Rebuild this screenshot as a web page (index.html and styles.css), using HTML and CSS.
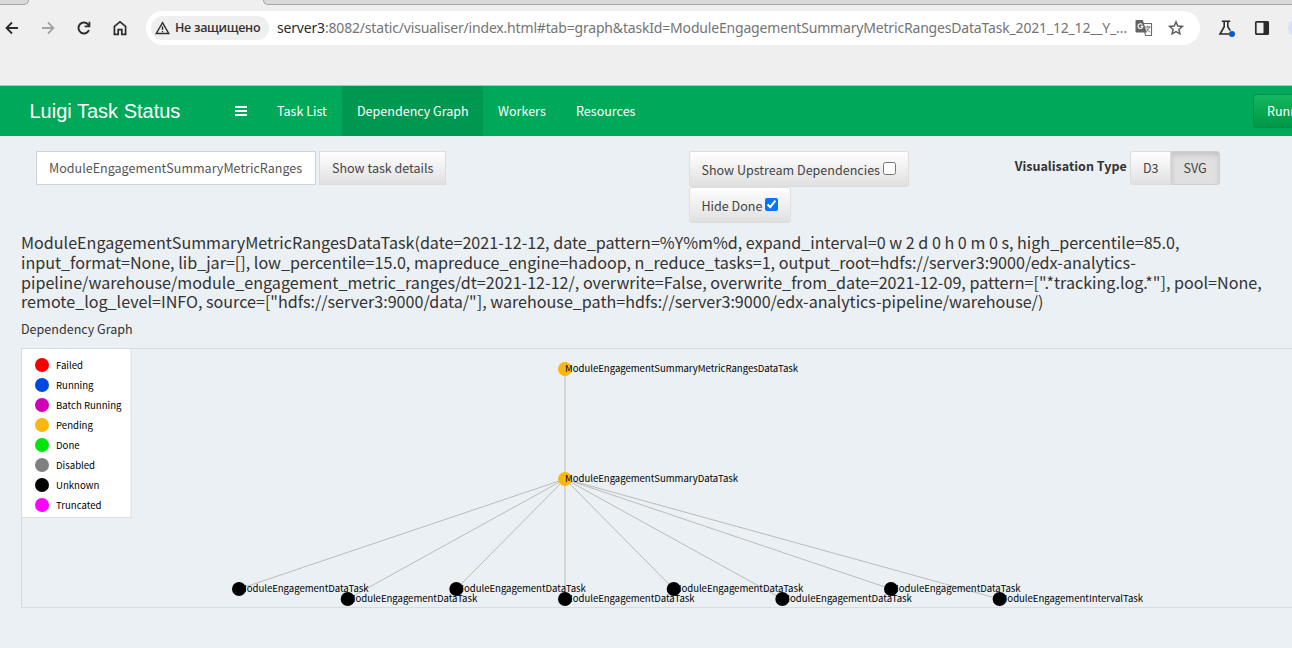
FILE: index.html
```html
<!DOCTYPE html>
<html lang="en">
<head>
<meta charset="utf-8">
<title>Luigi Task Visualiser</title>
<link rel="stylesheet" href="styles.css">
</head>
<body>
<div class="browser">
  <div class="tabstrip"><div class="tab-left"></div><div class="tab-active"></div><div class="tab-right"></div></div>
  <div class="toolbar">
    <div class="tools-left">
      <svg class="ico" viewBox="0 0 16 16"><path d="M14 8H2.800M8 2.500L2.500 8l5.500 5.500" fill="none" stroke="#2b2b2b" stroke-width="1.800"/></svg>
      <svg class="ico" viewBox="0 0 16 16"><path d="M2 8h11.200M8 2.500l5.500 5.500L8 13.500" fill="none" stroke="#a3a3a3" stroke-width="1.800"/></svg>
      <svg class="ico" viewBox="0 0 16 16"><path d="M13 10.200A5.500 5.500 0 1 1 12.300 4.600L13.200 5.700" fill="none" stroke="#2b2b2b" stroke-width="1.900"/><path d="M14.300 1.700v5.500H8.700V5.500h3.900V1.700z" fill="#2b2b2b"/></svg>
      <svg class="ico" viewBox="0 0 16 16"><path d="M2.400 6.300L8 1.900l5.600 4.400v8.100H9.800V9.600H6.200v4.800H2.400z" fill="none" stroke="#2b2b2b" stroke-width="1.700"/></svg>
    </div>
    <div class="omnibox">
      <div class="chip">
        <svg class="warn" viewBox="0 0 15 14"><path d="M7.500 1.700L13.700 12.500H1.300z" fill="none" stroke="#333" stroke-width="1.500"/><path d="M7.500 5.300v3.800M7.500 10v1.300" stroke="#333" stroke-width="1.400"/></svg>
        <span class="chip-text">Не защищено</span>
      </div>
      <div class="url"><span class="host">server3</span>:8082/static/visualiser/index.html#tab=graph&amp;taskId=ModuleEngagementSummaryMetricRangesDataTask_2021_12_12__Y_…</div>
      <svg class="translate" viewBox="0 0 18 18"><path d="M8 4.500h8.500v12H10.500z" fill="#fff" stroke="#6b6b6b" stroke-width="1.100"/><path d="M1.500 1h6.300l4 12.500H1.500a1 1 0 0 1-1-1V2a1 1 0 0 1 1-1z" fill="#646464"/><path d="M7.300 5.600A2.400 2.400 0 1 0 7.800 7.400H5.600" fill="none" stroke="#fff" stroke-width="1.100"/><path d="M10.300 8h5.200M12.600 6.800V8M14.500 8c-.5 2-2 3.500-3.200 4.500M11.700 9.500c.6 1.500 2 2.500 3.200 3.800" fill="none" stroke="#6b6b6b"/></svg>
      <svg class="star" viewBox="0 0 16 16"><path d="M8 1.900l1.800 4.100 4.500.4-3.400 3 1 4.400L8 11.500l-3.900 2.300 1-4.400-3.400-3 4.500-.4z" fill="none" stroke="#5c5c5c" stroke-width="1.500"/></svg>
    </div>
    <div class="tools-right">
      <svg class="flask" viewBox="0 0 18 18"><path d="M3.800 2.300h8.400M6.200 2.500v5.200L2 15h9M9.800 2.500v5.200l2.500 4" fill="none" stroke="#2b2b2b" stroke-width="1.600"/><circle cx="14" cy="15" r="3" fill="#0b57d0"/></svg>
      <svg class="panel" viewBox="0 0 16 16"><rect x="1.800" y="1.800" width="12.400" height="12.400" rx="1" fill="none" stroke="#2b2b2b" stroke-width="1.700"/><path d="M9.500 1.500h5v13h-5z" fill="#2b2b2b"/></svg>
      <div class="avatar"></div>
    </div>
  </div>
</div>

<header class="navbar">
  <div class="brand">Luigi Task Status</div>
  <div class="burger"><i></i><i></i><i></i></div>
  <nav class="nav">
    <a class="nav-item w-list">Task List</a>
    <a class="nav-item w-graph active">Dependency Graph</a>
    <a class="nav-item w-workers">Workers</a>
    <a class="nav-item w-res">Resources</a>
  </nav>
  <div class="run-btn">Running</div>
</header>

<main class="content">
  <div class="controls">
    <div class="search">
      <div class="field">ModuleEngagementSummaryMetricRanges</div>
      <div class="btn details">Show task details</div>
    </div>
    <div class="toggles">
      <label class="btn toggle upstream"><span>Show Upstream Dependencies</span><input class="check" type="checkbox"></label>
      <label class="btn toggle hide-done"><span>Hide Done</span><input class="check" type="checkbox" checked></label>
    </div>
    <div class="vis">
      <b class="vis-label">Visualisation Type</b>
      <div class="btn d3">D3</div><div class="btn svg-btn">SVG</div>
    </div>
  </div>

  <h1 class="task">ModuleEngagementSummaryMetricRangesDataTask(date=2021-12-12, date_pattern=%Y%m%d, expand_interval=0 w 2 d 0 h 0 m 0 s, high_percentile=85.0,<br>input_format=None, lib_jar=[], low_percentile=15.0, mapreduce_engine=hadoop, n_reduce_tasks=1, output_root=hdfs://server3:9000/edx-analytics-<br>pipeline/warehouse/module_engagement_metric_ranges/dt=2021-12-12/, overwrite=False, overwrite_from_date=2021-12-09, pattern=[".*tracking.log.*"], pool=None,<br>remote_log_level=INFO, source=["hdfs://server3:9000/data/"], warehouse_path=hdfs://server3:9000/edx-analytics-pipeline/warehouse/)</h1>
  <div class="subtitle">Dependency Graph</div>

  <div class="graph">
    <svg class="canvas" viewBox="22 349 1290 258" width="1290" height="258">
      <rect x="21.500" y="348.500" width="109.500" height="169" fill="#fff" stroke="#ddd"/>
      <g class="legend">
        <circle cx="42" cy="365" r="7" fill="#f70000"/><text x="56" y="369">Failed</text>
        <circle cx="42" cy="385" r="7" fill="#0048de"/><text x="56" y="389">Running</text>
        <circle cx="42" cy="405" r="7" fill="#cf00b8"/><text x="56" y="409">Batch Running</text>
        <circle cx="42" cy="425" r="7" fill="#fbb60f"/><text x="56" y="429">Pending</text>
        <circle cx="42" cy="445" r="7" fill="#00e30b"/><text x="56" y="449">Done</text>
        <circle cx="42" cy="465" r="7" fill="#808080"/><text x="56" y="469">Disabled</text>
        <circle cx="42" cy="485" r="7" fill="#000"/><text x="56" y="489">Unknown</text>
        <circle cx="42" cy="505" r="7" fill="#f0f"/><text x="56" y="509">Truncated</text>
      </g>
      <path class="links" d="M565 369V479M565 479L239 589M565 479L347.700 599M565 479L456.300 589M565 479V599M565 479L673.700 589M565 479L782.300 599M565 479L891 589M565 479L999.600 599"/>
      <g class="nodes">
        <circle cx="565" cy="369" r="7" fill="#fbb60f"/><text x="565" y="372" textLength="233">ModuleEngagementSummaryMetricRangesDataTask</text>
        <circle cx="565" cy="479" r="7" fill="#fbb60f"/><text x="565" y="482" textLength="173">ModuleEngagementSummaryDataTask</text>
        <circle cx="239" cy="589" r="7"/><text x="239" y="592" textLength="129.500">ModuleEngagementDataTask</text>
        <circle cx="347.700" cy="599" r="7"/><text x="347.700" y="602" textLength="129.500">ModuleEngagementDataTask</text>
        <circle cx="456.300" cy="589" r="7"/><text x="456.300" y="592" textLength="129.500">ModuleEngagementDataTask</text>
        <circle cx="565" cy="599" r="7"/><text x="565" y="602" textLength="129.500">ModuleEngagementDataTask</text>
        <circle cx="673.700" cy="589" r="7"/><text x="673.700" y="592" textLength="129.500">ModuleEngagementDataTask</text>
        <circle cx="782.300" cy="599" r="7"/><text x="782.300" y="602" textLength="129.500">ModuleEngagementDataTask</text>
        <circle cx="891" cy="589" r="7"/><text x="891" y="592" textLength="129.500">ModuleEngagementDataTask</text>
        <circle cx="999.600" cy="599" r="7"/><text x="999.600" y="602" textLength="143.500">ModuleEngagementIntervalTask</text>
      </g>
    </svg>
  </div>
</main>
</body>
</html>
```

FILE: styles.css
```css
* { box-sizing: border-box; }
body {
  margin: 0;
  width: 1292px;
  height: 648px;
  overflow: hidden;
  background: #ebf0f4;
  color: #333;
  font: 12.54px/20px "Noto Sans CJK SC", "Noto Sans", sans-serif;
  white-space: nowrap;
}
svg { display: block; flex: none; }

/* Browser chrome */
.browser { height: 86px; background: #efefef; border-bottom: 1px solid #bcbcbc; }
.tabstrip { display: flex; height: 5px; overflow: hidden; }
.tab-left { width: 29px; background: #d9d9d9; border: solid #a6a6a6; border-width: 0 1px 1px 0; border-radius: 0 0 8px 0; }
.tab-active { width: 234px; }
.tab-right { flex: 1; background: #d9d9d9; border: solid #a6a6a6; border-width: 0 0 1px 1px; border-radius: 0 0 0 8px; }
.toolbar { display: flex; height: 34px; margin-top: 6px; align-items: center; }
.tools-left { display: flex; gap: 20px; padding-left: 4px; width: 146px; }
.ico { width: 16px; height: 16px; }
.omnibox { display: flex; align-items: center; width: 1054px; height: 34px; padding-left: 5px; border-radius: 17px; background: #fff; }
.chip { display: flex; align-items: center; width: 118px; height: 24px; padding-left: 4px; gap: 5px; border-radius: 12px; background: #efefef; }
.warn { width: 15px; height: 14px; }
.chip-text { font: 600 12.500px/24px "Open Sans", "Noto Sans", sans-serif; color: #333; letter-spacing: -0.3px; }
.url { width: 858px; margin-left: 8px; font: 14px/24px "Noto Sans", sans-serif; color: #747474; letter-spacing: -0.18px; }
.host { color: #2b2b2b; }
.translate { width: 18px; height: 18px; }
.star { width: 16px; height: 16px; margin-left: 15px; }
.tools-right { display: flex; align-items: center; width: 92px; padding-left: 18px; overflow: hidden; }
.flask { width: 18px; height: 18px; }
.panel { width: 16px; height: 16px; margin-left: 18px; }
.avatar { flex: none; width: 18px; height: 18px; margin-left: 18px; border-radius: 50%; background: #d3e3fd; }

/* Application navigation */
.navbar { display: flex; height: 50px; background: #00a85a; color: #fff; overflow: hidden; }
.brand { flex: none; width: 220px; padding-left: 29.500px; font: 20px/50px "Liberation Sans", Arial, sans-serif; }
.burger { flex: none; width: 42px; padding: 20px 0 0 15px; }
.burger i { display: block; width: 12px; height: 2px; margin-bottom: 2px; background: #fff; }
.nav { display: flex; flex: none; width: 991px; }
.nav-item { padding-left: 15px; line-height: 50px; }
.w-list { width: 80px; }
.w-graph { width: 141px; }
.w-workers { width: 78px; }
.w-res { width: 90px; }
.active { background: #009750; }
.run-btn { flex: none; width: 80px; height: 34px; margin-top: 8px; padding-left: 13px; line-height: 32px; border: 1px solid #008d4c; border-radius: 3px; background: linear-gradient(#13b760, #009745); }

/* Controls */
.content { padding: 15px 0 0 21px; }
.controls { display: flex; height: 82px; align-items: flex-start; padding-left: 15px; }
.search { display: flex; width: 653px; gap: 3px; }
.field { width: 280px; height: 34px; padding-left: 12px; line-height: 31px; border: 1px solid #ccd3df; background: #fff; color: #555; }
.btn { height: 34px; padding-left: 12px; line-height: 31px; border: 1px solid #ddd; background: linear-gradient(#fff, #e0e0e0); color: #444; }
.details { width: 127px; }
.toggles { width: 325px; }
.toggle { display: flex; height: 36px; padding-left: 11.500px; line-height: 35px; border-radius: 3px; gap: 3px; }
.upstream { width: 220px; }
.hide-done { width: 102px; }
.check { width: 13px; height: 13px; margin: 10px 0 0; }
.vis { display: flex; }
.vis-label { width: 116px; padding-left: 0.700px; line-height: 30px; }
.d3 { width: 41px; border-radius: 3px 0 0 3px; }
.svg-btn { width: 49px; padding-left: 11.500px; border-radius: 0 3px 3px 0; background: #e0e0e0; border-color: #d0d0d0; box-shadow: inset 0 3px 5px rgba(0, 0, 0, .125); }

/* Task description */
.task { margin: 0; height: 81px; font-size: 16.12px; line-height: 19.800px; font-weight: 400; color: #333; }
.subtitle { height: 34px; line-height: 30px; }

/* Graph */
.graph { height: 260px; border: 1px solid #d9dcdf; border-right: 0; overflow: hidden; }
.canvas text { font: 9.600px "Noto Sans CJK SC", "Noto Sans", sans-serif; fill: #000; }
.links { fill: none; stroke: #bbb; stroke-width: 1; }
```
